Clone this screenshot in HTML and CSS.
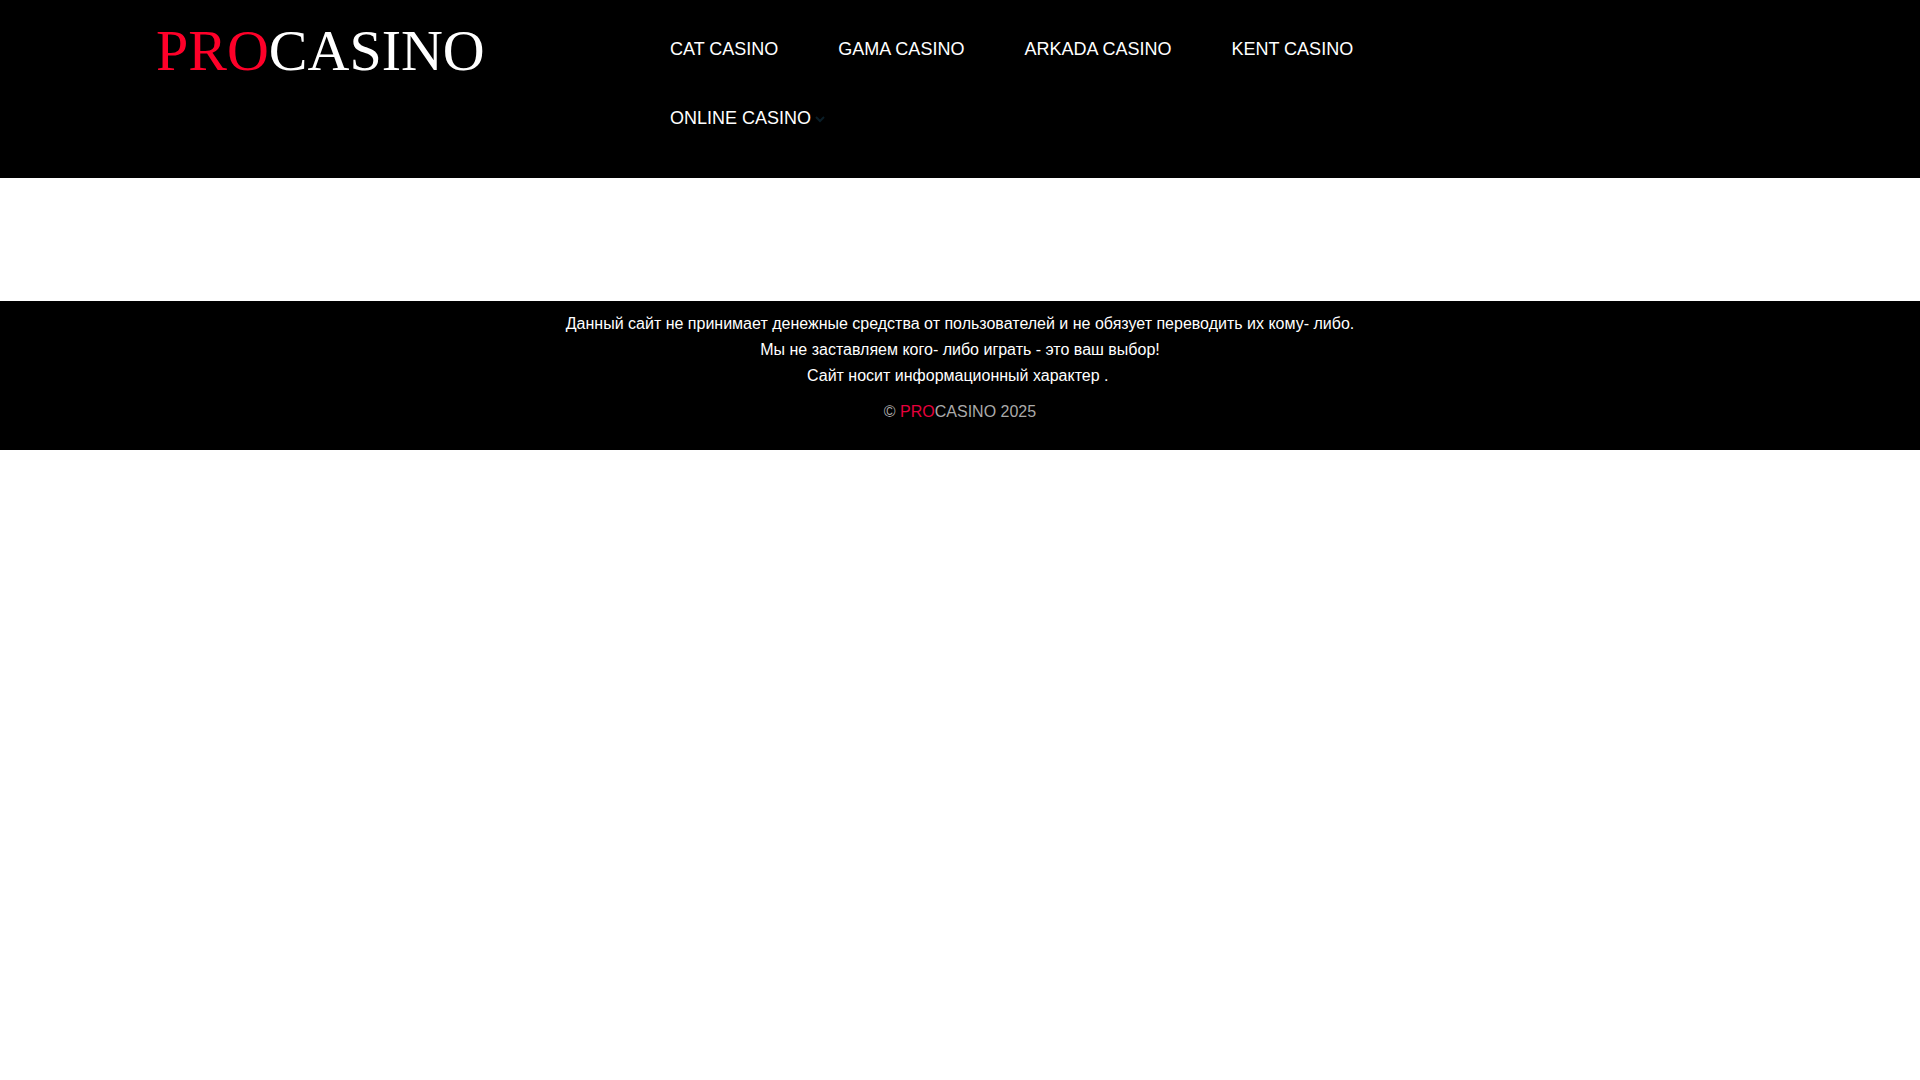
FILE: index.html
```html
<!DOCTYPE html>
<html lang="ru">
<head>
<meta charset="utf-8">
<title>PROCASINO</title>
<link rel="stylesheet" href="styles.css">
</head>
<body>
<header class="header">
  <div class="container">
    <a class="logo" href="#"><span class="logo-accent">PRO</span>CASINO</a>
    <nav class="menu">
      <a href="#">CAT CASINO</a>
      <a href="#">GAMA CASINO</a>
      <a href="#">ARKADA CASINO</a>
      <a href="#">KENT CASINO</a>
      <a href="#">ONLINE CASINO<svg class="chevron" viewBox="0 0 10 10"><path d="M1 3l4 4 4-4"/></svg></a>
    </nav>
  </div>
</header>
<main class="content"></main>
<footer class="footer">
  <p class="notice">Данный сайт не принимает денежные средства от пользователей и не обязует переводить их кому- либо.<br>Мы не заставляем кого- либо играть - это ваш выбор!<br>Сайт носит информационный характер .&nbsp;</p>
  <p class="copyright">© <span class="accent">PRO</span>CASINO 2025</p>
</footer>
</body>
</html>
```

FILE: styles.css
```css
body {
  margin: 0;
  background: #fff;
  font: 16px/26px "Liberation Sans", Arial, sans-serif;
}

.header {
  background: #000;
}

.container {
  display: flex;
  max-width: 1610px;
  margin: 0 auto;
  padding: 15px 0 25px;
}

.logo {
  box-sizing: border-box;
  flex: 0 0 515px;
  padding-left: 1px;
  color: #fff;
  font: 58px/72px "Liberation Serif", "Times New Roman", serif;
  text-decoration: none;
}

.logo-accent {
  color: #ff0029;
}

.accent {
  color: #e6003c;
}

.menu {
  display: flex;
  flex-wrap: wrap;
  gap: 0 60px;
  max-width: 800px;
}

.menu a {
  color: #fff;
  font-size: 18px;
  line-height: 69px;
  text-decoration: none;
}

.chevron {
  width: 10px;
  height: 10px;
  margin-left: 4px;
  fill: none;
  stroke: #0a1e28;
  stroke-width: 2;
}

.content {
  min-height: 123px;
}

.footer {
  padding: 10px 15px 25px;
  background: #000;
  text-align: center;
}

.notice {
  margin: 0 0 10px;
  color: #fff;
}

.copyright {
  margin: 0;
  color: #aaa;
}
```
